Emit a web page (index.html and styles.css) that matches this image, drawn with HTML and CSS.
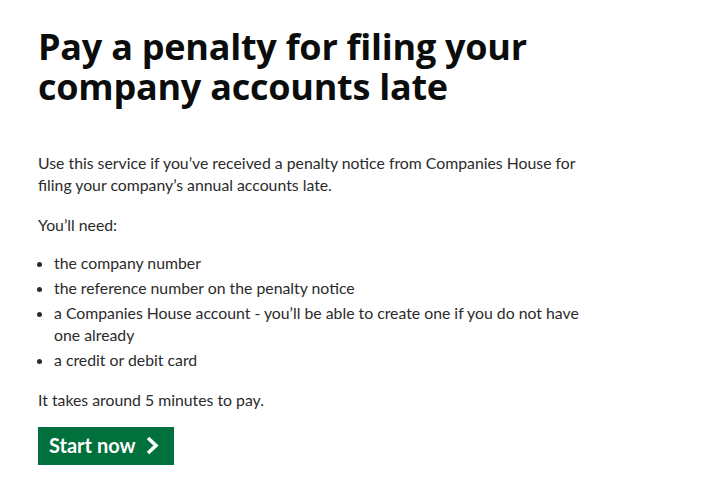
FILE: index.html
```html
<!DOCTYPE html>
<html lang="en">
<head>
<meta charset="utf-8">
<title>Pay a penalty</title>
<link rel="stylesheet" href="styles.css">
</head>
<body>
<main class="page">
  <h1 class="title">Pay a penalty for filing your company accounts late</h1>
  <p class="body">Use this service if you’ve received a penalty notice from Companies House for filing your company’s annual accounts late.</p>
  <p class="body">You’ll need:</p>
  <ul class="list">
    <li>the company number</li>
    <li>the reference number on the penalty notice</li>
    <li>a Companies House account - you’ll be able to create one if you do not have one already</li>
    <li>a credit or debit card</li>
  </ul>
  <p class="body last">It takes around 5 minutes to pay.</p>
  <a class="start" href="#">Start now
    <svg class="chev" width="13" height="19" viewBox="0 0 13 19" aria-hidden="true"><path d="M2 2 L10 9.5 L2 17" fill="none" stroke="#fff" stroke-width="3.6"/></svg>
  </a>
</main>
</body>
</html>
```
FILE: styles.css
```css
html, body { margin: 0; padding: 0; background: #fff; }
body { font-family: Lato, "Liberation Sans", sans-serif; color: #2b2b2b; }
.page { padding: 27px 0 0 38px; width: 548px; }
.title {
  margin: 0 0 45px 0;
  font-family: "Open Sans", Lato, sans-serif;
  font-size: 36px;
  line-height: 40px;
  font-weight: 700;
  color: #0b0c0c;
  letter-spacing: -0.25px;
  width: 540px;
}
.body { margin: 0 0 18px 0; font-size: 15.8px; line-height: 22px; }
.body.last { margin-bottom: 16px; }
.list { margin: -2px 0 18px 0; padding: 0 0 0 16px; font-size: 15.8px; line-height: 22px; }
.list li { margin-bottom: 3px; padding-left: 0; }
.list li:last-child { margin-bottom: 0; }
.start {
  display: inline-flex; align-items: center; gap: 10px;
  box-sizing: border-box; height: 38px; width: 136px;
  background: #00703c; color: #fff; text-decoration: none;
  font-size: 20px; font-weight: 700; padding: 0 0 2px 11px;
  box-shadow: 0 2px 0 #002d18;
}
```
